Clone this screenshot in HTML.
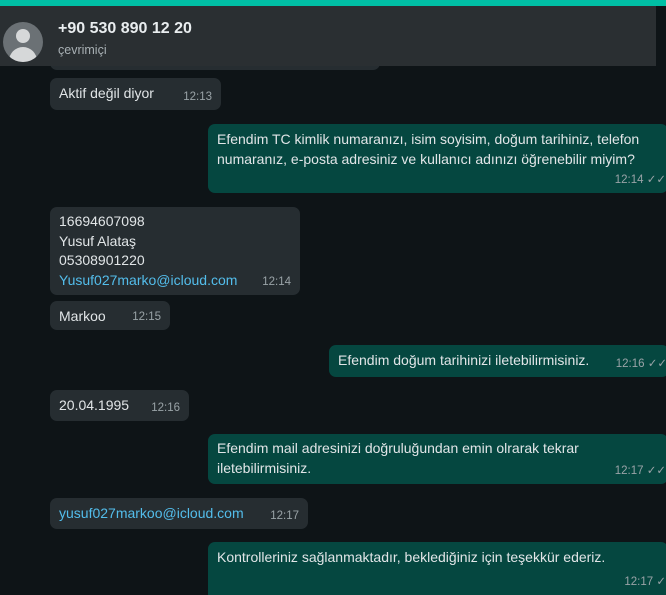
<!DOCTYPE html>
<html><head><meta charset="utf-8"><style>
*{margin:0;padding:0;box-sizing:border-box}
html,body{width:666px;height:595px;overflow:hidden}
body{background:#0e1417;font-family:"Liberation Sans",sans-serif;position:relative;color:#e1e5e7}
.top{position:absolute;left:0;top:0;width:666px;height:6px;background:#00bfa5}
.hdr{position:absolute;left:0;top:6px;width:656px;height:60px;background:#2a2f32}
.av{position:absolute;left:3px;top:16px;width:40px;height:40px;border-radius:50%;background:#6b7175;overflow:hidden}
.av:before{content:"";position:absolute;left:13px;top:7px;width:14px;height:14px;border-radius:50%;background:#d6d8d9}
.av:after{content:"";position:absolute;left:6px;top:25px;width:28px;height:20px;border-radius:14px 14px 0 0;background:#d6d8d9}
.name{position:absolute;left:58px;top:14px;font-size:16px;font-weight:bold;color:#e9edef}
.st{position:absolute;left:58px;top:37px;font-size:12.5px;color:#a8b0b4}
.b{position:absolute;border-radius:7px;font-size:14px;line-height:19.5px;padding:6px 9px}
.i{background:#262d31;left:50px}
.o{background:#054740;left:208px;width:460px}
.t{position:absolute;right:9px;bottom:3px;font-size:11.5px;color:#9aa3a7}
.o .t{right:2px}
.l{color:#53bdeb}
</style></head><body>
<div class="b i" style="top:40px;width:330px;height:30px"></div>
<div class="top"></div>
<div class="hdr"><div class="av"></div><div class="name">+90 530 890 12 20</div><div class="st">çevrimiçi</div></div>
<div class="b i" style="top:78px;width:171px;height:32px">Aktif değil diyor<span class="t">12:13</span></div>
<div class="b o" style="top:124px;height:69px;padding-top:6px">Efendim TC kimlik numaranızı, isim soyisim, doğum tarihiniz, telefon<br>numaranız, e-posta adresiniz ve kullanıcı adınızı öğrenebilir miyim?<span class="t">12:14 ✓✓</span></div>
<div class="b i" style="top:207px;width:250px;height:88px;padding-top:5px">16694607098<br>Yusuf Alataş<br>05308901220<br><span class="l">Yusuf027marko@icloud.com</span><span class="t">12:14</span></div>
<div class="b i" style="top:301px;width:120px;height:29px">Markoo<span class="t">12:15</span></div>
<div class="b o" style="top:345px;left:329px;width:340px;height:32px">Efendim doğum tarihinizi iletebilirmisiniz.<span class="t">12:16 ✓✓</span></div>
<div class="b i" style="top:390px;width:139px;height:31px">20.04.1995<span class="t">12:16</span></div>
<div class="b o" style="top:434px;height:50px;padding-top:5px">Efendim mail adresinizi doğruluğundan emin olrarak tekrar<br>iletebilirmisiniz.<span class="t">12:17 ✓✓</span></div>
<div class="b i" style="top:498px;width:258px;height:31px"><span class="l">yusuf027markoo@icloud.com</span><span class="t">12:17</span></div>
<div class="b o" style="top:542px;height:60px;padding-top:6px">Kontrolleriniz sağlanmaktadır, beklediğiniz için teşekkür ederiz.<span class="t" style="bottom:10px">12:17 ✓</span></div>
</body></html>
